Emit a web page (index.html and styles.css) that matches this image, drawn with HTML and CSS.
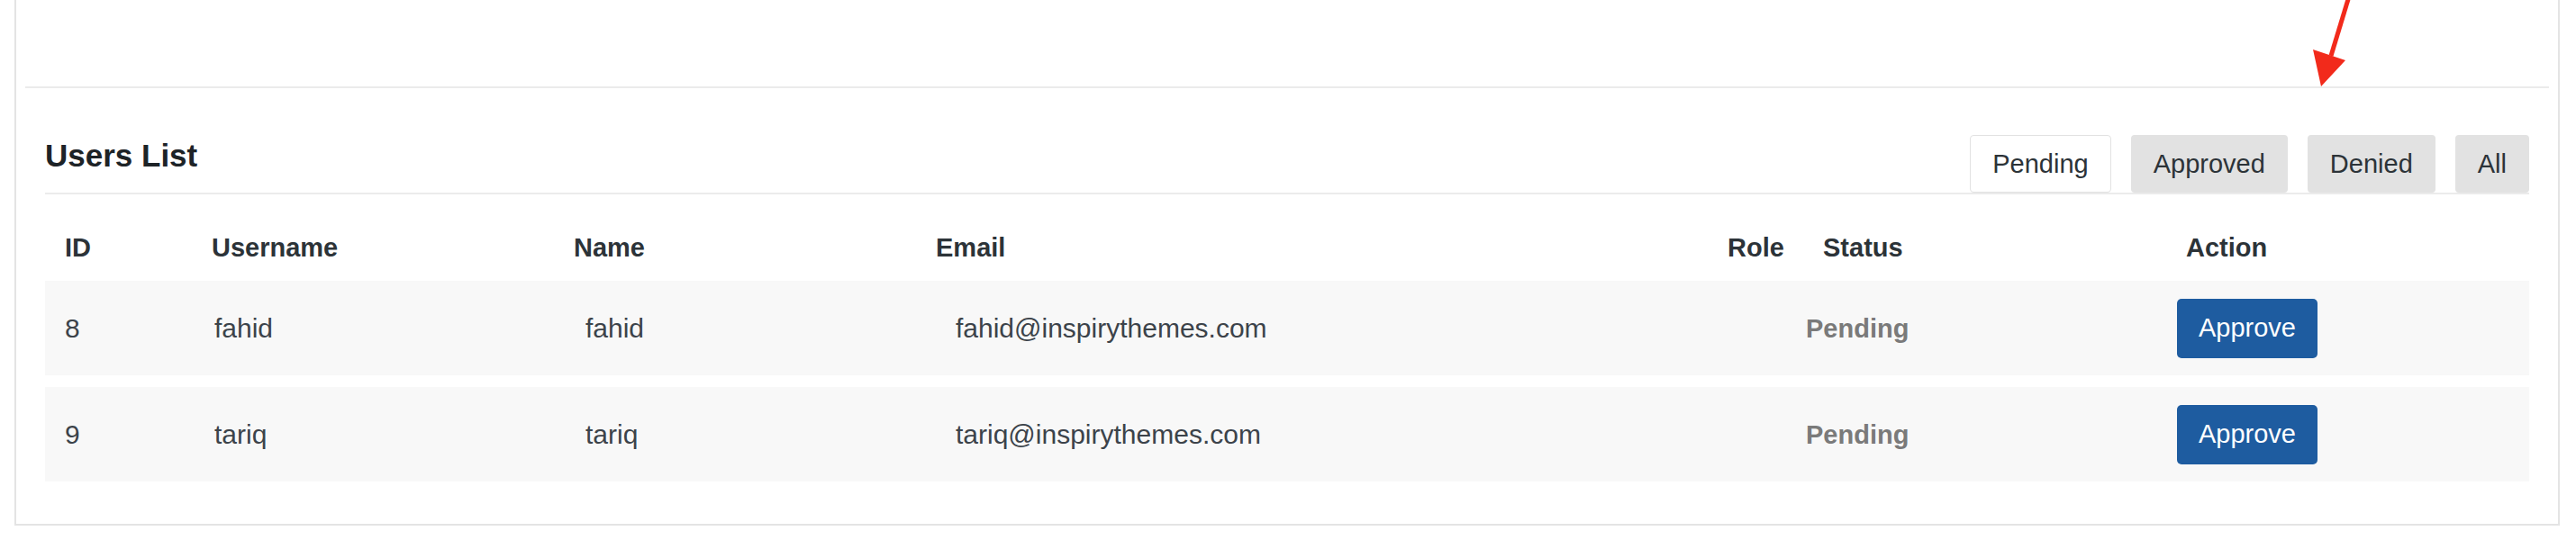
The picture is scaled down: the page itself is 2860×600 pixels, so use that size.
FILE: index.html
```html
<!DOCTYPE html>
<html lang="en">
<head>
<meta charset="utf-8">
<title>Users List</title>
<link rel="stylesheet" href="styles.css">
</head>
<body>
<div class="card">
  <div class="top-panel"></div>
  <section class="users">
    <div class="users-head">
      <h2 class="users-title">Users List</h2>
      <nav class="tabs">
        <button class="tab tab-active">Pending</button>
        <button class="tab">Approved</button>
        <button class="tab">Denied</button>
        <button class="tab">All</button>
      </nav>
    </div>
    <div class="thead">
      <div>ID</div>
      <div>Username</div>
      <div>Name</div>
      <div>Email</div>
      <div>Role</div>
      <div>Status</div>
      <div>Action</div>
    </div>
    <div class="trow">
      <div>8</div>
      <div>fahid</div>
      <div>fahid</div>
      <div>fahid@inspirythemes.com</div>
      <div></div>
      <div class="status">Pending</div>
      <div><button class="btn-approve">Approve</button></div>
    </div>
    <div class="trow">
      <div>9</div>
      <div>tariq</div>
      <div>tariq</div>
      <div>tariq@inspirythemes.com</div>
      <div></div>
      <div class="status">Pending</div>
      <div><button class="btn-approve">Approve</button></div>
    </div>
  </section>
  <svg class="arrow" width="60" height="100" viewBox="0 0 60 100">
    <line x1="46" y1="-4" x2="26" y2="62" stroke="#f22a1b" stroke-width="5"/>
    <polygon points="15,96 6,55 42,67" fill="#f22a1b"/>
  </svg>
</div>
</body>
</html>
```

FILE: styles.css
```css
* { box-sizing: border-box; }

html, body {
  margin: 0;
  padding: 0;
  background: #ffffff;
}

body {
  font-family: "Liberation Sans", Arial, sans-serif;
  color: #3c434a;
  height: 600px;
  overflow: hidden;
}

.card {
  position: relative;
  margin: 0 18px 0 16px;
  border: 2px solid #e4e4e4;
  border-top: 0;
  background: #ffffff;
  padding-bottom: 47px;
}

.top-panel {
  height: 98px;
  margin: 0 10px;
  border-bottom: 2px solid #ebebeb;
}

.users {
  padding: 0 32px;
}

.users-head {
  display: flex;
  justify-content: space-between;
  align-items: flex-start;
  padding-top: 52px;
  border-bottom: 2px solid #ebebeb;
}

.users-title {
  margin: 3px 0 0 0;
  font-size: 35px;
  line-height: 40px;
  font-weight: 700;
  color: #1d2327;
}

.tabs {
  display: flex;
  gap: 22px;
}

.tab {
  height: 64px;
  padding: 0 24px;
  border: 1px solid transparent;
  border-radius: 4px;
  background: #e2e2e2;
  font-family: "Liberation Sans", Arial, sans-serif;
  font-size: 29px;
  line-height: 62px;
  color: #2c3338;
}

.tab-active {
  background: #ffffff;
  border-color: #e2e2e2;
}

.thead {
  display: grid;
  grid-template-columns: 163px 402px 402px 879px 106px 403px 1fr;
  padding: 42px 0 19px 22px;
  font-size: 29px;
  line-height: 35px;
  font-weight: 700;
  color: #2c3338;
}

.trow {
  display: grid;
  grid-template-columns: 166px 412px 411px 839px 105px 412px 1fr;
  align-items: center;
  height: 105px;
  padding-left: 22px;
  background: #f8f8f8;
  font-size: 30px;
  line-height: 36px;
  color: #3c434a;
}

.trow + .trow {
  margin-top: 13px;
}

.status {
  font-size: 29px;
  font-weight: 700;
  color: #7a7a7a;
}

.btn-approve {
  width: 156px;
  height: 66px;
  border: 0;
  border-radius: 5px;
  background: #1e5ca0;
  color: #ffffff;
  font-family: "Liberation Sans", Arial, sans-serif;
  font-size: 29px;
  padding: 0;
}

.arrow {
  position: absolute;
  left: 2544px;
  top: 0;
}
```
